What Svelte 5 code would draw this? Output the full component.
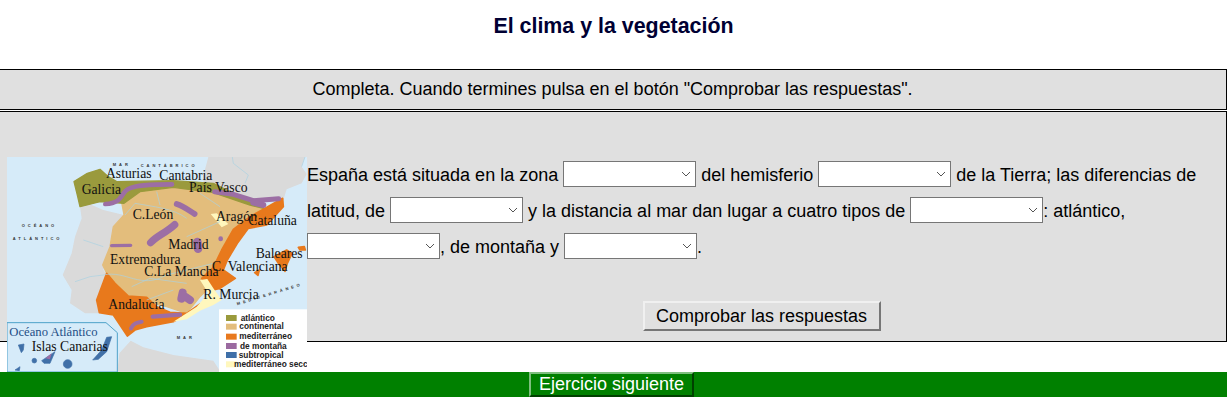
<script>
  const lineOne = "España está situada en la zona";
  const legend = [
    { label: "atlántico", color: "#9a9a3c", y: 495, x: 722 },
    { label: "continental", color: "#e3bd7c", y: 521, x: 718 },
    { label: "mediterráneo", color: "#e8791e", y: 551, x: 718 },
    { label: "de montaña", color: "#9b6aa0", y: 579, x: 720 },
    { label: "subtropical", color: "#3f6fa8", y: 606, x: 716 },
    { label: "mediterráneo secc", color: "#fff7bd", y: 634, x: 702 }
  ];
  const labels = [
    { t: "Asturias", x: 318, y: 85 },
    { t: "Cantabria", x: 478, y: 90 },
    { t: "Galicia", x: 245, y: 133 },
    { t: "País Vasco", x: 567, y: 125 },
    { t: "C.León", x: 398, y: 207 },
    { t: "Aragón", x: 648, y: 212 },
    { t: "Cataluña", x: 745, y: 225 },
    { t: "Madrid", x: 505, y: 298 },
    { t: "Baleares", x: 767, y: 325 },
    { t: "Extremadura", x: 330, y: 342 },
    { t: "C. Valenciana", x: 636, y: 362 },
    { t: "C.La Mancha", x: 433, y: 378 },
    { t: "R. Murcia", x: 610, y: 447 },
    { t: "Andalucía", x: 325, y: 478 },
    { t: "Islas Canarias", x: 95, y: 604 }
  ];
</script>

<div class="page">
  <h1>El clima y la vegetación</h1>

  <div class="box instructions">Completa. Cuando termines pulsa en el botón "Comprobar las respuestas".</div>

  <div class="box exercise">
    <svg class="map" viewBox="21 21 900 645" role="img" aria-label="Mapa de climas de España">
      <defs>
        <filter id="soft" x="-5%" y="-5%" width="110%" height="110%">
          <feGaussianBlur stdDeviation="1.6" />
        </filter>
      </defs>
      <rect x="21" y="21" width="900" height="645" fill="#d6ebf9" />
      <g filter="url(#soft)">
        <!-- France -->
        <path d="M625 21 L915 21 L905 50 L920 72 L905 100 L860 118 L850 150 L760 150 L700 125 L610 95 L612 70 Z" fill="#dadada" />
        <!-- Africa -->
        <path d="M352 666 L358 610 L392 572 L430 592 L520 615 L640 632 L662 666 Z" fill="#dadada" />
        <!-- Portugal -->
        <path d="M240 170 L270 163 L310 180 L372 195 L340 230 L330 290 L310 360 L320 372 L290 450 L300 490 L255 490 L210 460 L215 420 L188 375 L215 310 L225 260 L245 205 Z" fill="#dadada" />
        <!-- Continental -->
        <path d="M360 130 L520 105 L640 125 L790 175 L740 235 L710 280 L680 330 L640 400 L600 440 L560 490 L500 470 L380 440 L340 400 L320 370 L308 345 L330 290 L340 230 L372 195 Z" fill="#e3bd7c" stroke="#e3bd7c" stroke-width="4" stroke-linejoin="round" />
        <!-- Atlantic -->
        <path d="M222 95 L262 70 L300 58 L325 80 L350 95 L520 92 L640 100 L700 130 L790 175 L750 165 L640 128 L520 112 L420 125 L372 160 L300 155 L240 170 L232 135 Z" fill="#9a9a3c" stroke="#9a9a3c" stroke-width="4" stroke-linejoin="round" />
        <!-- Mediterranean -->
        <g fill="#e8791e" stroke="#e8791e" stroke-width="5" stroke-linejoin="round">
          <path d="M848 145 L850 170 L800 225 L745 235 L712 280 L682 330 L670 360 L706 385 L660 415 L630 422 L605 385 L640 352 L665 300 L700 238 L750 200 L790 178 Z" />
          <path d="M320 370 L345 400 L385 438 L440 442 L470 470 L510 487 L560 490 L600 462 L570 488 L520 515 L440 530 L405 540 L382 558 L340 495 L298 488 L290 450 Z" />
          <path d="M822 320 L860 300 L876 310 L862 340 L855 364 L835 340 Z M895 292 L913 290 L916 300 L900 300 Z M764 368 L778 360 L774 376 Z" />
        </g>
        <!-- Dry mediterranean -->
        <path d="M600 390 L622 387 L642 418 L665 450 L640 465 L600 482 L560 508 L520 515 L590 470 L625 430 Z M632 192 L650 190 L685 222 L665 232 Z" fill="#fff7bd" />
        <!-- Mountains -->
        <g fill="none" stroke="#9c6ea4" stroke-linecap="round" stroke-linejoin="round">
          <path d="M316 162 C350 160 358 150 372 128 C385 108 420 106 470 104 L516 103" stroke-width="14" />
          <path d="M644 125 L700 133 L760 152 L836 146" stroke-width="15" />
          <path d="M760 158 L790 165" stroke-width="18" />
          <path d="M530 162 C550 168 565 180 584 192" stroke-width="17" />
          <path d="M452 278 C470 258 495 250 524 224" stroke-width="22" />
          <path d="M335 287 L392 286" stroke-width="10" />
          <path d="M592 276 L594 296" stroke-width="26" />
          <path d="M662 266 L662 267" stroke-width="14" />
          <path d="M548 428 L544 446 M556 440 L570 450" stroke-width="24" />
          <path d="M458 500 L500 497 L540 494" stroke-width="13" />
          <path d="M393 535 C400 520 410 518 425 515" stroke-width="12" />
        </g>
        <!-- Rivers -->
        <g fill="none" stroke="#a9d2e2" stroke-width="2">
          <path d="M697 21 L700 40 L745 75 L735 100 M915 21 L905 50" />
          <path d="M405 160 C460 170 520 175 560 205 M405 160 L375 195" />
          <path d="M310 375 C380 360 420 420 500 375 L640 340" />
          <path d="M395 410 L450 385 L560 400 M440 450 L520 420" />
          <path d="M470 125 L480 165 M560 260 L660 215 M600 130 L660 170" />
          <path d="M225 395 L270 380 L310 375 M250 270 L310 290" />
        </g>
        <!-- Inset -->
        <path d="M21 518 L318 518 L352 548 L352 666 L21 666 Z" fill="#d6ebf9" stroke="#4ea2c9" stroke-width="3" />
        <g fill="#3f6fa8" stroke="#3f6fa8" stroke-width="2" stroke-linejoin="round">
          <path d="M55 585 L72 582 L70 600 L64 608 Z" />
          <circle cx="103" cy="632" r="7" />
          <path d="M125 632 L165 605 L150 640 L132 640 Z" />
          <circle cx="203" cy="642" r="13" />
          <path d="M278 630 L305 600 L320 562 L335 560 L320 605 L295 628 Z" />
          <path d="M45 660 L60 650 L58 662 Z" />
        </g>
        <path d="M136 625 L155 610 L150 628 Z" fill="#9c6ea4" />
      </g>
      <!-- Small map lettering -->
      <g class="tiny">
        <text x="338" y="49">MAR</text>
        <text x="422" y="50">CANTÁBRICO</text>
        <text x="65" y="232">OCÉANO</text>
        <text x="38" y="270">ATLÁNTICO</text>
        <text x="530" y="568">MAR</text>
        <text x="712" y="466" transform="rotate(-17 712 466)">MEDITERRÁNEO</text>
      </g>
      {#each labels as label}
        <text class="region" x={label.x} y={label.y}>{label.t}</text>
      {/each}
      <text class="region ocean" x="28" y="557">Océano Atlántico</text>
      <!-- Legend -->
      <rect x="657" y="478" width="264" height="188" fill="#fff" />
      {#each legend as item}
        <rect x="678" y={item.y} width="32" height="18" fill={item.color} />
        <text class="legend" x={item.x} y={item.y + 17}>{item.label}</text>
      {/each}
    </svg>

    <div class="content">
      <p class="text">
        {lineOne} <select></select> del hemisferio <select></select> de la Tierra; las diferencias de latitud, de <select></select> y la distancia al mar dan lugar a cuatro tipos de <select></select>: atlántico, <select></select>, de montaña y <select></select>.
      </p>
      <button class="check">Comprobar las respuestas</button>
    </div>
  </div>

  <div class="footer">
    <button class="next">Ejercicio siguiente</button>
  </div>
</div>

<style>
  :global(body) {
    background: #fff;
  }
  .page {
    width: 1227px;
    overflow: hidden;
    font-family: "Liberation Sans", Arial, sans-serif;
    font-size: 18px;
    color: #000;
  }
  h1 {
    margin: 0;
    height: 69px;
    padding-top: 14px;
    box-sizing: border-box;
    text-align: center;
    font-size: 21.4px;
    line-height: 24px;
    font-weight: bold;
    color: #000033;
  }
  .box {
    margin-left: -2px;
    background: #e0e0e0;
    border: 1px solid #000;
    box-sizing: border-box;
  }
  .instructions {
    height: 41px;
    margin-bottom: 1px;
    text-align: center;
    line-height: 39px;
  }
  .exercise {
    height: 231px;
    display: flex;
    align-items: flex-start;
    margin-bottom: 30px;
    padding-left: 8px;
  }
  .map {
    flex: none;
    display: block;
    width: 300px;
    height: 215px;
    margin-top: 45px;
    position: relative;
  }
  .region {
    font-family: "Liberation Serif", serif;
    font-size: 41px;
    fill: #111;
  }
  .ocean {
    fill: #1f4f86;
    font-size: 38px;
  }
  .tiny text {
    font-family: "Liberation Sans", sans-serif;
    font-size: 12px;
    font-weight: bold;
    letter-spacing: 9px;
    fill: #333;
  }
  .legend {
    font-family: "Liberation Sans", sans-serif;
    font-size: 25px;
    font-weight: bold;
    fill: #222;
  }
  .content {
    flex: 1;
    padding-right: 10px;
    display: flex;
    flex-direction: column;
    align-items: center;
  }
  .text {
    margin: 45px 0 0;
    width: 100%;
    line-height: 36px;
  }
  select {
    appearance: none;
    width: 133px;
    height: 26px;
    border: 1px solid #767676;
    border-radius: 0;
    vertical-align: 2px;
    font-size: 16px;
    background: #fff url("data:image/svg+xml,%3Csvg xmlns='http://www.w3.org/2000/svg' width='10' height='6'%3E%3Cpath d='M1 1l4 4 4-4' fill='none' stroke='%23555' stroke-width='1'/%3E%3C/svg%3E") no-repeat right 4px center;
  }
  .check {
    margin-top: 36px;
    width: 238px;
    height: 30px;
    padding: 0;
    background: #e0e0e0;
    border: 2px solid;
    border-color: #f0f0f0 #767676 #767676 #f0f0f0;
    font-family: inherit;
    font-size: 18px;
    color: #000;
  }
  .footer {
    height: 25px;
    padding-right: 4px;
    background: #008000;
    display: flex;
    justify-content: center;
  }
  .next {
    width: 165px;
    height: 25px;
    padding: 0;
    background: #008000;
    border: 2px solid;
    border-color: #7fbf7f #004000 #004000 #7fbf7f;
    color: #fff;
    font-family: inherit;
    font-size: 18px;
  }
</style>
